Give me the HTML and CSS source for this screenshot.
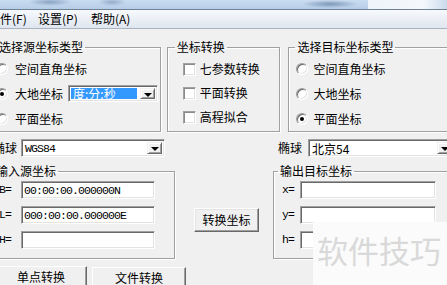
FILE: index.html
```html
<!DOCTYPE html>
<html lang="zh-CN">
<head>
<meta charset="utf-8">
<title>坐标转换</title>
<link rel="stylesheet" href="styles.css">
</head>
<body>
<div class="titlebar"><div class="tb-btns"></div></div>
<div class="menubar">
  <span class="menu m1">文件(F)</span>
  <span class="menu m2">设置(P)</span>
  <span class="menu m3">帮助(A)</span>
</div>
<div class="content">
  <div class="row1">
    <fieldset class="grp src">
      <legend>选择源坐标类型</legend>
      <div class="rows r25">
        <div class="opt"><span class="radio"></span><span class="lbl">空间直角坐标</span></div>
        <div class="opt"><span class="radio checked"></span><span class="lbl">大地坐标</span>
          <div class="combo"><span class="combo-sel">度:分:秒</span><span class="arrow"></span></div>
        </div>
        <div class="opt"><span class="radio"></span><span class="lbl">平面坐标</span></div>
      </div>
    </fieldset>
    <fieldset class="grp conv">
      <legend>坐标转换</legend>
      <div class="rows r24">
        <div class="opt"><span class="check"></span><span class="lbl">七参数转换</span></div>
        <div class="opt"><span class="check"></span><span class="lbl">平面转换</span></div>
        <div class="opt"><span class="check"></span><span class="lbl">高程拟合</span></div>
      </div>
    </fieldset>
    <fieldset class="grp dst">
      <legend>选择目标坐标类型</legend>
      <div class="rows r25d">
        <div class="opt"><span class="radio"></span><span class="lbl">空间直角坐标</span></div>
        <div class="opt"><span class="radio"></span><span class="lbl">大地坐标</span></div>
        <div class="opt"><span class="radio checked"></span><span class="lbl">平面坐标</span></div>
      </div>
    </fieldset>
  </div>

  <div class="row2">
    <span class="ell-lbl l1">椭球</span>
    <div class="select s1"><span class="sel-text mono">WGS84</span><span class="arrow"></span></div>
    <span class="ell-lbl l2">椭球</span>
    <div class="select s2"><span class="sel-text">北京54</span><span class="arrow"></span></div>
  </div>

  <div class="row3">
    <fieldset class="grp ingrp">
      <legend>输入源坐标</legend>
      <div class="fields">
        <div class="field"><span class="flbl mono">B=</span><span class="edit mono">00:00:00.000000N</span></div>
        <div class="field"><span class="flbl mono">L=</span><span class="edit mono">000:00:00.000000E</span></div>
        <div class="field"><span class="flbl mono">H=</span><span class="edit mono"></span></div>
      </div>
    </fieldset>
    <div class="mid"><button class="btn" type="button">转换坐标</button></div>
    <fieldset class="grp outgrp">
      <legend>输出目标坐标</legend>
      <div class="fields">
        <div class="field"><span class="flbl mono">x=</span><span class="edit"></span></div>
        <div class="field"><span class="flbl mono">y=</span><span class="edit"></span></div>
        <div class="field"><span class="flbl mono">h=</span><span class="edit"></span></div>
      </div>
    </fieldset>
  </div>

  <div class="tabs">
    <div class="tab t1">单点转换</div>
    <div class="tab t2">文件转换</div>
  </div>
</div>
<div class="watermark">软件技巧</div>
</body>
</html>
```
FILE: styles.css
```css
* { box-sizing: border-box; margin: 0; padding: 0; }
html, body { width: 447px; height: 285px; overflow: hidden; }
body {
  background: #f0f0f0;
  font: 12px/12px "Noto Sans CJK SC", "Noto Sans", sans-serif;
  color: #000;
  position: relative;
}
.mono { font-family: "Liberation Mono", "DejaVu Sans Mono", monospace; font-size: 11.5px; letter-spacing: -0.9px; }

/* title bar remnant */
.titlebar {
  height: 10px;
  border-bottom: 1px solid #6d8197;
  background:
    radial-gradient(ellipse 22px 4px at 50px 2px, rgba(90,120,160,.55), rgba(90,120,160,0)),
    radial-gradient(ellipse 14px 4px at 112px 2px, rgba(90,120,160,.45), rgba(90,120,160,0)),
    radial-gradient(ellipse 28px 4px at 330px 4px, rgba(70,100,140,.55), rgba(70,100,140,0)),
    linear-gradient(#c9dcf0, #b7cee7);
  position: relative;
}
.tb-btns {
  position: absolute; left: 368px; top: 0; width: 80px; height: 9px;
  background: linear-gradient(90deg, #eef3f9, #f4f7fb 70%, #c7d9ec);
}

/* menu bar */
.menubar {
  height: 19px;
  display: flex;
  align-items: center;
  background: linear-gradient(#f7f9fc, #dfe6ef);
  border-bottom: 1px solid #aab4c1;
  line-height: 18px;
}
.menu { display: block; white-space: nowrap; }
.m1 { margin-left: -12px; width: 50px; }
.m2 { width: 53px; }
.m3 { width: 60px; }

/* content */
.content { margin-left: -12px; width: 480px; padding-top: 12px; }

.grp {
  border: 1px solid #a0a0a0;
  box-shadow: inset 1px 1px 0 #fff, 1px 1px 0 #fff;
  padding: 0;
  min-width: 0;
}
.grp legend {
  font-size: 12px;
  line-height: 12px;
  padding: 0 2px;
  white-space: nowrap;
}

.row1 { display: flex; align-items: stretch; }
.src { margin-left: 3px; width: 170px; }
.src legend { margin-left: 5px; }
.conv { margin-left: 6px; width: 114px; }
.conv legend { margin-left: 7px; }
.dst { margin-left: 8px; width: 180px; }
.dst legend { margin-left: 6px; }

.rows { display: flex; flex-direction: column; }
.r25 { padding: 3px 0 0 4px; }
.r25 .opt { height: 25px; }
.r24 { padding: 4px 0 2px 15px; }
.r24 .opt { height: 24px; }
.r25d { padding: 3px 0 0 7px; }
.r25d .opt { height: 25px; }

.opt { display: flex; align-items: center; white-space: nowrap; }

.radio {
  width: 12px; height: 12px; border-radius: 50%;
  background: #fff;
  border: 1px solid;
  border-color: #9a9a9a #ffffff #ffffff #9a9a9a;
  box-shadow: inset 1px 1px 0 #6a6a6a, inset -1px -1px 0 #e3e3e3;
  position: relative;
  flex: none;
}
.radio.checked::after {
  content: ""; position: absolute; left: 3px; top: 3px;
  width: 4px; height: 4px; border-radius: 50%; background: #000;
}
.r25 .radio { margin-right: 7px; }
.r25d .radio { margin-right: 5px; }

.check {
  width: 13px; height: 13px;
  background: #fff;
  border: 1px solid;
  border-color: #a0a0a0 #ffffff #ffffff #a0a0a0;
  box-shadow: inset 1px 1px 0 #8c8c8c, inset -1px -1px 0 #e3e3e3;
  margin-right: 4px;
  flex: none;
}

.combo {
  margin-left: 5px;
  width: 90px; height: 17px;
  display: flex; align-items: stretch;
  background: #fff;
  border: 1px solid; border-color: #a0a0a0 #fff #fff #a0a0a0;
  box-shadow: inset 1px 1px 0 #696969, inset -1px -1px 0 #e3e3e3;
  padding: 2px;
}
.combo-sel {
  flex: 1; background: #3399ff; color: #fff;
  line-height: 11px; padding-left: 2px;
  margin-right: 3px;
}
.arrow {
  width: 15px; flex: none;
  background: #f0f0f0;
  border: 1px solid; border-color: #f0f0f0 #696969 #696969 #f0f0f0;
  box-shadow: inset 1px 1px 0 #fff, inset -1px -1px 0 #a0a0a0;
  position: relative;
}
.arrow::after {
  content: ""; position: absolute; left: 3px; top: 4px;
  border-left: 4px solid transparent; border-right: 4px solid transparent;
  border-top: 4px solid #000;
}

/* row 2 */
.row2 { display: flex; align-items: center; height: 18px; margin-top: 7px; }
.ell-lbl { width: 24px; white-space: nowrap; }
.l1 { margin-left: 5px; }
.l2 { margin-left: 113px; }
.select {
  height: 18px;
  display: flex; align-items: stretch;
  background: #fff;
  border: 1px solid; border-color: #a0a0a0 #fff #fff #a0a0a0;
  box-shadow: inset 1px 1px 0 #696969, inset -1px -1px 0 #e3e3e3;
  padding: 2px;
}
.s1 { margin-left: 4px; width: 144px; }
.s2 { margin-left: 6px; width: 147px; }
.sel-text { flex: 1; line-height: 13px; padding-left: 1px; white-space: nowrap; }
.sel-text.mono { line-height: 14px; }

/* row 3 */
.row3 { display: flex; align-items: stretch; margin-top: 8px; }
.ingrp { width: 187px; }
.ingrp legend { margin-left: 5px; }
.outgrp { width: 190px; }
.outgrp legend { margin-left: 4px; }
.fields { display: flex; flex-direction: column; gap: 7px; padding: 4px 0 9px 0; }
.ingrp .fields { padding-left: 10px; }
.outgrp .fields { padding-left: 8px; }
.field { display: flex; align-items: center; height: 18px; }
.flbl { width: 22px; white-space: nowrap; }
.outgrp .flbl { width: 18px; }
.edit {
  height: 18px;
  background: #fff;
  border: 1px solid; border-color: #a0a0a0 #fff #fff #a0a0a0;
  box-shadow: inset 1px 1px 0 #696969, inset -1px -1px 0 #e3e3e3;
  padding: 2px 0 0 2px;
  line-height: 13px;
  white-space: nowrap;
}
.ingrp .edit { width: 134px; }
.outgrp .edit { width: 136px; }

.mid { width: 98px; flex: none; padding-top: 43px; padding-left: 19px; }
.btn {
  width: 65px; height: 24px;
  background: #f0f0f0;
  font: 12px/12px "Noto Sans CJK SC", sans-serif;
  color: #000;
  border: 1px solid; border-color: #ffffff #696969 #696969 #ffffff;
  box-shadow: inset -1px -1px 0 #a0a0a0, inset 1px 1px 0 #e3e3e3;
}

/* tabs */
.tabs { display: flex; margin-top: 7px; height: 20px; }
.tab {
  height: 20px;
  text-align: center;
  padding-top: 4px;
  border: 1px solid; border-bottom: none;
  border-color: #ffffff #696969 #696969 #ffffff;
  box-shadow: inset -1px 0 0 #a0a0a0;
  background: #f0f0f0;
}
.t1 { margin-left: 7px; width: 92px; }
.t2 { margin-left: 5px; width: 94px; margin-top: 1px; }

/* watermark overlay */
.watermark {
  position: absolute; left: 313px; top: 222px; width: 134px; height: 63px;
  background: #fbfbfb;
  color: #d9d9d9;
  font: 31px/31px "Noto Sans CJK SC", sans-serif;
  padding: 12px 0 0 4px;
  white-space: nowrap;
}
```
